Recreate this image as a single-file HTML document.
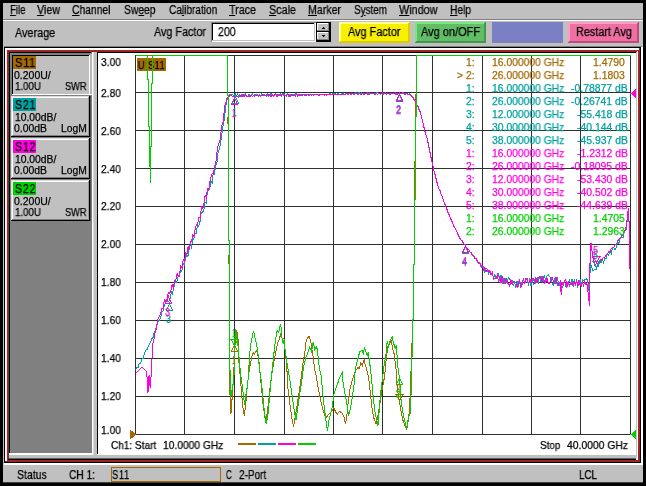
<!DOCTYPE html>
<html><head><meta charset="utf-8"><title>Network Analyzer</title>
<style>
html,body{margin:0;padding:0;background:#000;}
body{width:646px;height:486px;position:relative;overflow:hidden;font-family:"Liberation Sans",sans-serif;}
body>div{position:absolute;}
.t{position:absolute;white-space:pre;line-height:1;font-family:"Liberation Sans",sans-serif;-webkit-text-stroke:0.25px;will-change:transform;}
u{text-decoration:underline;text-underline-offset:1px;}
svg{position:absolute;left:0;top:0;}
svg text{font-family:"Liberation Sans",sans-serif;}
</style></head><body>
<div style="left:3px;top:3px;width:640px;height:480px;background:#c0c0c0;"></div>
<div style="left:3px;top:19px;width:640px;height:1px;background:#808080;"></div>
<div style="left:3px;top:20px;width:640px;height:1px;background:#fff;"></div>
<span class="t " style="top:2px;font-size:12px;line-height:16px;color:#000;left:9.50px;transform-origin:left top;transform:scaleX(0.8018);"><u>F</u>ile</span>
<span class="t " style="top:2px;font-size:12px;line-height:16px;color:#000;left:37.00px;transform-origin:left top;transform:scaleX(0.8906);"><u>V</u>iew</span>
<span class="t " style="top:2px;font-size:12px;line-height:16px;color:#000;left:72.00px;transform-origin:left top;transform:scaleX(0.8613);"><u>C</u>hannel</span>
<span class="t " style="top:2px;font-size:12px;line-height:16px;color:#000;left:124.00px;transform-origin:left top;transform:scaleX(0.8584);">Sw<u>e</u>ep</span>
<span class="t " style="top:2px;font-size:12px;line-height:16px;color:#000;left:168.75px;transform-origin:left top;transform:scaleX(0.8412);">Ca<u>l</u>ibration</span>
<span class="t " style="top:2px;font-size:12px;line-height:16px;color:#000;left:229.00px;transform-origin:left top;transform:scaleX(0.8932);"><u>T</u>race</span>
<span class="t " style="top:2px;font-size:12px;line-height:16px;color:#000;left:269.00px;transform-origin:left top;transform:scaleX(0.8996);"><u>S</u>cale</span>
<span class="t " style="top:2px;font-size:12px;line-height:16px;color:#000;left:308.00px;transform-origin:left top;transform:scaleX(0.8840);"><u>M</u>arker</span>
<span class="t " style="top:2px;font-size:12px;line-height:16px;color:#000;left:354.00px;transform-origin:left top;transform:scaleX(0.8248);">S<u>y</u>stem</span>
<span class="t " style="top:2px;font-size:12px;line-height:16px;color:#000;left:399.00px;transform-origin:left top;transform:scaleX(0.9015);"><u>W</u>indow</span>
<span class="t " style="top:2px;font-size:12px;line-height:16px;color:#000;left:450.00px;transform-origin:left top;transform:scaleX(0.8508);"><u>H</u>elp</span>
<span class="t " style="top:25px;font-size:12px;line-height:16px;color:#000;left:14.90px;transform-origin:left top;transform:scaleX(0.9037);">Average</span>
<span class="t " style="top:24px;font-size:12px;line-height:16px;color:#000;left:154.00px;transform-origin:left top;transform:scaleX(0.8996);">Avg Factor</span>
<div style="left:211px;top:22px;width:105px;height:20px;background:#fff;"></div>
<div style="left:211px;top:22px;width:105px;height:1px;background:#808080;"></div>
<div style="left:211px;top:22px;width:1px;height:20px;background:#808080;"></div>
<div style="left:212px;top:23px;width:103px;height:1px;background:#000;"></div>
<div style="left:212px;top:23px;width:1px;height:18px;background:#000;"></div>
<div style="left:212px;top:40px;width:103px;height:1px;background:#c0c0c0;"></div>
<div style="left:314px;top:23px;width:1px;height:18px;background:#c0c0c0;"></div>
<span class="t " style="top:24px;font-size:12px;line-height:16px;color:#000;left:217.60px;transform-origin:left top;transform:scaleX(0.8843);">200</span>
<div style="left:316px;top:22px;width:15px;height:20px;background:#000;"></div>
<div style="left:317px;top:23px;width:12px;height:8px;background:#c0c0c0;"></div>
<div style="left:317px;top:23px;width:11px;height:1px;background:#fff;"></div>
<div style="left:317px;top:23px;width:1px;height:7px;background:#fff;"></div>
<div style="left:328px;top:23px;width:1px;height:8px;background:#808080;"></div>
<div style="left:317px;top:30px;width:12px;height:1px;background:#808080;"></div>
<div style="left:323px;top:27px;width:1px;height:1px;background:#000;"></div>
<div style="left:322px;top:28px;width:3px;height:1px;background:#000;"></div>
<div style="left:317px;top:32px;width:12px;height:8px;background:#c0c0c0;"></div>
<div style="left:317px;top:32px;width:11px;height:1px;background:#fff;"></div>
<div style="left:317px;top:32px;width:1px;height:7px;background:#fff;"></div>
<div style="left:328px;top:32px;width:1px;height:8px;background:#808080;"></div>
<div style="left:317px;top:39px;width:12px;height:1px;background:#808080;"></div>
<div style="left:322px;top:35px;width:3px;height:1px;background:#000;"></div>
<div style="left:323px;top:36px;width:1px;height:1px;background:#000;"></div>
<div style="left:339px;top:22px;width:71px;height:21px;background:#f8f000;"></div>
<div style="left:339px;top:22px;width:71px;height:2px;background:#ffff98;"></div>
<div style="left:339px;top:22px;width:2px;height:21px;background:#ffff98;"></div>
<div style="left:340px;top:41px;width:70px;height:1px;background:#dccc00;"></div>
<div style="left:339px;top:42px;width:71px;height:1px;background:#dccc00;"></div>
<div style="left:408px;top:23px;width:1px;height:20px;background:#dccc00;"></div>
<div style="left:409px;top:22px;width:1px;height:21px;background:#dccc00;"></div>
<span class="t " style="top:24px;font-size:12px;line-height:16px;color:#000;left:348.00px;transform-origin:left top;transform:scaleX(0.9082);">Avg Factor</span>
<div style="left:415px;top:22px;width:71px;height:21px;background:#62be66;"></div>
<div style="left:415px;top:22px;width:71px;height:2px;background:#76e87c;"></div>
<div style="left:415px;top:22px;width:2px;height:21px;background:#76e87c;"></div>
<div style="left:416px;top:41px;width:70px;height:1px;background:#44984c;"></div>
<div style="left:415px;top:42px;width:71px;height:1px;background:#44984c;"></div>
<div style="left:484px;top:23px;width:1px;height:20px;background:#44984c;"></div>
<div style="left:485px;top:22px;width:1px;height:21px;background:#44984c;"></div>
<span class="t " style="top:24px;font-size:12px;line-height:16px;color:#000;left:421.00px;transform-origin:left top;transform:scaleX(0.9151);">Avg on/OFF</span>
<div style="left:492px;top:22px;width:71px;height:21px;background:#7b7fc3;"></div>
<div style="left:568px;top:22px;width:71px;height:21px;background:#ee6fa2;"></div>
<div style="left:568px;top:22px;width:71px;height:2px;background:#ff9cc4;"></div>
<div style="left:568px;top:22px;width:2px;height:21px;background:#ff9cc4;"></div>
<div style="left:569px;top:41px;width:70px;height:1px;background:#c04a7c;"></div>
<div style="left:568px;top:42px;width:71px;height:1px;background:#c04a7c;"></div>
<div style="left:637px;top:23px;width:1px;height:20px;background:#c04a7c;"></div>
<div style="left:638px;top:22px;width:1px;height:21px;background:#c04a7c;"></div>
<span class="t " style="top:24px;font-size:12px;line-height:16px;color:#000;left:575.80px;transform-origin:left top;transform:scaleX(0.9027);">Restart Avg</span>
<div style="left:4px;top:46px;width:638px;height:1px;background:#808080;"></div>
<div style="left:4px;top:47px;width:637px;height:1px;background:#000;"></div>
<div style="left:4px;top:47px;width:1px;height:416px;background:#000;"></div>
<div style="left:641px;top:47px;width:2px;height:418px;background:#fff;"></div>
<div style="left:4px;top:463px;width:639px;height:2px;background:#fff;"></div>
<div style="left:5px;top:48px;width:634px;height:2px;background:#fff;"></div>
<div style="left:5px;top:48px;width:2px;height:413px;background:#fff;"></div>
<div style="left:639px;top:48px;width:1px;height:415px;background:#404848;"></div>
<div style="left:640px;top:47px;width:1px;height:416px;background:#000;"></div>
<div style="left:5px;top:461px;width:635px;height:1px;background:#404848;"></div>
<div style="left:4px;top:462px;width:637px;height:1px;background:#000;"></div>
<div style="left:7px;top:50px;width:632px;height:1px;background:#ff0000;"></div>
<div style="left:7px;top:460px;width:632px;height:1px;background:#ff0000;"></div>
<div style="left:7px;top:50px;width:1px;height:411px;background:#ff0000;"></div>
<div style="left:638px;top:50px;width:1px;height:411px;background:#ff0000;"></div>
<div style="left:8px;top:51px;width:630px;height:1px;background:#404848;"></div>
<div style="left:8px;top:51px;width:1px;height:409px;background:#404848;"></div>
<div style="left:9px;top:52px;width:628px;height:1px;background:#000;"></div>
<div style="left:9px;top:52px;width:1px;height:408px;background:#000;"></div>
<div style="left:8px;top:459px;width:629px;height:1px;background:#000;"></div>
<div style="left:637px;top:51px;width:1px;height:409px;background:#fff;"></div>
<div style="left:10px;top:53px;width:82px;height:400px;background:#808080;"></div>
<div style="left:9px;top:453px;width:628px;height:2px;background:#fff;"></div>
<div style="left:9px;top:455px;width:628px;height:3px;background:#c0c0c0;"></div>
<div style="left:9px;top:458px;width:628px;height:1px;background:#606060;"></div>
<div style="left:636px;top:458px;width:2px;height:2px;background:#fff;"></div>
<div style="left:91px;top:52px;width:1px;height:1px;background:#808080;"></div>
<div style="left:92px;top:52px;width:1px;height:403px;background:#fff;"></div>
<div style="left:93px;top:52px;width:1px;height:403px;background:#dcdcdc;"></div>
<div style="left:94px;top:52px;width:3px;height:403px;background:#c0c0c0;"></div>
<div style="left:11px;top:54px;width:80px;height:41px;background:#c0c0c0;"></div>
<div style="left:11px;top:54px;width:80px;height:1px;background:#808080;"></div>
<div style="left:11px;top:54px;width:1px;height:41px;background:#808080;"></div>
<div style="left:12px;top:55px;width:78px;height:1px;background:#000;"></div>
<div style="left:12px;top:55px;width:1px;height:39px;background:#000;"></div>
<div style="left:12px;top:94px;width:80px;height:1px;background:#fff;"></div>
<div style="left:89px;top:55px;width:1px;height:40px;background:#fff;"></div>
<div style="left:90px;top:54px;width:2px;height:40px;background:#b8b8b8;"></div>
<div style="left:13px;top:56px;width:23px;height:13px;background:#a46a00;"></div>
<span class="t " style="top:55px;font-size:12px;line-height:16px;color:#000;left:14.90px;transform-origin:left top;transform:scaleX(0.9164);letter-spacing:0.9px;">S11</span>
<span class="t " style="top:69px;font-size:10.3px;line-height:13px;color:#000;left:14.10px;transform-origin:left top;transform:scaleX(1.0172);">0.200U/</span>
<span class="t " style="top:80px;font-size:10.3px;line-height:13px;color:#000;left:15.10px;transform-origin:left top;transform:scaleX(0.9461);">1.00U</span>
<span class="t " style="top:80px;font-size:10.3px;line-height:13px;color:#000;left:64.60px;transform-origin:left top;transform:scaleX(0.8989);">SWR</span>
<div style="left:11px;top:96px;width:80px;height:41px;background:#c0c0c0;"></div>
<div style="left:11px;top:96px;width:79px;height:1px;background:#dcdcdc;"></div>
<div style="left:11px;top:96px;width:1px;height:40px;background:#dcdcdc;"></div>
<div style="left:12px;top:97px;width:77px;height:1px;background:#fff;"></div>
<div style="left:12px;top:97px;width:1px;height:38px;background:#fff;"></div>
<div style="left:12px;top:135px;width:78px;height:1px;background:#808080;"></div>
<div style="left:88px;top:97px;width:1px;height:39px;background:#989898;"></div>
<div style="left:11px;top:136px;width:80px;height:1px;background:#000;"></div>
<div style="left:89px;top:96px;width:1px;height:41px;background:#000;"></div>
<div style="left:90px;top:96px;width:1px;height:41px;background:#505050;"></div>
<div style="left:13px;top:98px;width:23px;height:13px;background:#00a0a0;"></div>
<span class="t " style="top:97px;font-size:12px;line-height:16px;color:#000;left:14.90px;transform-origin:left top;transform:scaleX(0.8813);letter-spacing:0.9px;">S21</span>
<span class="t " style="top:111px;font-size:10.3px;line-height:13px;color:#000;left:14.90px;transform-origin:left top;transform:scaleX(1.0039);">10.00dB/</span>
<span class="t " style="top:122px;font-size:10.3px;line-height:13px;color:#000;left:14.10px;transform-origin:left top;transform:scaleX(1.0110);">0.00dB</span>
<span class="t " style="top:122px;font-size:10.3px;line-height:13px;color:#000;left:60.50px;transform-origin:left top;transform:scaleX(0.9977);">LogM</span>
<div style="left:11px;top:138px;width:80px;height:41px;background:#c0c0c0;"></div>
<div style="left:11px;top:138px;width:79px;height:1px;background:#dcdcdc;"></div>
<div style="left:11px;top:138px;width:1px;height:40px;background:#dcdcdc;"></div>
<div style="left:12px;top:139px;width:77px;height:1px;background:#fff;"></div>
<div style="left:12px;top:139px;width:1px;height:38px;background:#fff;"></div>
<div style="left:12px;top:177px;width:78px;height:1px;background:#808080;"></div>
<div style="left:88px;top:139px;width:1px;height:39px;background:#989898;"></div>
<div style="left:11px;top:178px;width:80px;height:1px;background:#000;"></div>
<div style="left:89px;top:138px;width:1px;height:41px;background:#000;"></div>
<div style="left:90px;top:138px;width:1px;height:41px;background:#505050;"></div>
<div style="left:13px;top:140px;width:23px;height:13px;background:#ff00e0;"></div>
<span class="t " style="top:139px;font-size:12px;line-height:16px;color:#000;left:14.90px;transform-origin:left top;transform:scaleX(0.8813);letter-spacing:0.9px;">S12</span>
<span class="t " style="top:153px;font-size:10.3px;line-height:13px;color:#000;left:14.90px;transform-origin:left top;transform:scaleX(1.0039);">10.00dB/</span>
<span class="t " style="top:164px;font-size:10.3px;line-height:13px;color:#000;left:14.10px;transform-origin:left top;transform:scaleX(1.0110);">0.00dB</span>
<span class="t " style="top:164px;font-size:10.3px;line-height:13px;color:#000;left:60.50px;transform-origin:left top;transform:scaleX(0.9977);">LogM</span>
<div style="left:11px;top:180px;width:80px;height:41px;background:#c0c0c0;"></div>
<div style="left:11px;top:180px;width:79px;height:1px;background:#dcdcdc;"></div>
<div style="left:11px;top:180px;width:1px;height:40px;background:#dcdcdc;"></div>
<div style="left:12px;top:181px;width:77px;height:1px;background:#fff;"></div>
<div style="left:12px;top:181px;width:1px;height:38px;background:#fff;"></div>
<div style="left:12px;top:219px;width:78px;height:1px;background:#808080;"></div>
<div style="left:88px;top:181px;width:1px;height:39px;background:#989898;"></div>
<div style="left:11px;top:220px;width:80px;height:1px;background:#000;"></div>
<div style="left:89px;top:180px;width:1px;height:41px;background:#000;"></div>
<div style="left:90px;top:180px;width:1px;height:41px;background:#505050;"></div>
<div style="left:13px;top:182px;width:23px;height:13px;background:#00d000;"></div>
<span class="t " style="top:181px;font-size:12px;line-height:16px;color:#000;left:14.90px;transform-origin:left top;transform:scaleX(0.8813);letter-spacing:0.9px;">S22</span>
<span class="t " style="top:195px;font-size:10.3px;line-height:13px;color:#000;left:14.10px;transform-origin:left top;transform:scaleX(1.0172);">0.200U/</span>
<span class="t " style="top:206px;font-size:10.3px;line-height:13px;color:#000;left:15.10px;transform-origin:left top;transform:scaleX(0.9461);">1.00U</span>
<span class="t " style="top:206px;font-size:10.3px;line-height:13px;color:#000;left:64.60px;transform-origin:left top;transform:scaleX(0.8989);">SWR</span>
<div style="left:97px;top:52px;width:1px;height:402px;background:#000;"></div>
<div style="left:98px;top:53px;width:538px;height:400px;background:#fff;"></div>
<div style="left:636px;top:52px;width:1px;height:406px;background:#c4c4c4;"></div>
<div style="left:3px;top:482px;width:640px;height:1px;background:#404040;"></div>
<span class="t " style="top:467px;font-size:12.6px;line-height:16px;color:#000;left:17.30px;transform-origin:left top;transform:scaleX(0.8314);">Status</span>
<span class="t " style="top:467px;font-size:12.6px;line-height:16px;color:#000;left:69.30px;transform-origin:left top;transform:scaleX(0.8073);">CH 1:</span>
<div style="left:111px;top:467px;width:110px;height:15px;background:#a46a00;"></div>
<div style="left:112px;top:468px;width:108px;height:13px;background:#c0c0c0;"></div>
<span class="t " style="top:467px;font-size:12px;line-height:16px;color:#000;left:111.90px;transform-origin:left top;transform:scaleX(0.7727);letter-spacing:0.9px;">S11</span>
<span class="t " style="top:467px;font-size:12.6px;line-height:16px;color:#000;left:225.80px;transform-origin:left top;transform:scaleX(0.6376);">C</span>
<span class="t " style="top:467px;font-size:12.6px;line-height:16px;color:#000;left:239.00px;transform-origin:left top;transform:scaleX(0.7957);">2-Port</span>
<span class="t " style="top:467px;font-size:12.6px;line-height:16px;color:#000;left:578.60px;transform-origin:left top;transform:scaleX(0.7789);">LCL</span>
<div style="left:137px;top:58px;width:29px;height:13px;background:#a46a00;"></div>
<span class="t " style="top:58px;font-size:11px;line-height:14px;color:#000;left:137.90px;transform-origin:left top;transform:scaleX(0.7945);letter-spacing:0.9px;">U S11</span>
<svg width="646" height="486" viewBox="0 0 646 486">
<path d="M135.5 55V435M184.5 55V435M234.5 55V435M284.5 55V435M333.5 55V435M382.5 55V435M432.5 55V435M482.5 55V435M531.5 55V435M580.5 55V435M630.5 55V435M135 55.5H631M135 92.5H631M135 130.5H631M135 168.5H631M135 206.5H631M135 244.5H631M135 282.5H631M135 320.5H631M135 358.5H631M135 396.5H631M135 434.5H631" stroke="#303030" stroke-width="1" fill="none" shape-rendering="crispEdges"/>
<path d="M135.5 55.5 L227.5 55.5 L227.5 95.0 L228.5 96.0 L228.5 117.0 L227.5 118.0 L227.5 123.0 L228.5 124.0 L228.5 240.0 L229.5 241.0 L229.5 255.0 L228.5 256.0 L228.5 263.0 L229.5 264.0 L229.5 370.0 L230.0 395.0 L230.4 413.8 L231.2 412.0 L232.3 395.0 L233.7 376.0 L234.6 350.0 L235.9 329.1 L236.5 335.0 L237.4 333.0 L238.0 339.0 L238.4 350.2 L239.0 362.6 L240.2 376.0 L241.5 392.0 L242.7 405.7 L244.3 416.2 L245.8 403.2 L247.0 389.6 L248.5 376.0 L248.9 372.5 L250.1 365.0 L252.0 356.4 L253.2 352.7 L254.5 354.5 L255.5 351.4 L256.7 350.2 L257.6 353.9 L258.8 360.1 L260.1 374.0 L261.9 392.1 L263.2 405.7 L265.0 418.1 L265.9 423.0 L267.3 412.0 L268.7 400.8 L270.0 388.4 L271.4 376.2 L273.7 362.6 L275.5 353.9 L277.4 344.0 L279.3 339.0 L280.5 334.7 L281.7 337.8 L284.2 339.0 L284.8 347.7 L286.1 360.1 L287.3 375.0 L287.9 388.4 L289.8 403.2 L291.6 416.9 L293.5 426.8 L295.3 416.9 L297.2 404.5 L299.1 392.1 L301.3 377.0 L302.8 363.8 L304.7 353.9 L306.2 340.3 L307.8 337.5 L309.4 336.3 L310.9 342.8 L312.7 353.9 L314.6 368.8 L316.4 377.0 L318.3 388.4 L320.8 400.8 L323.2 410.7 L325.7 418.1 L328.2 415.0 L331.3 411.9 L333.8 407.6 L335.6 411.9 L337.5 413.8 L339.3 411.3 L342.4 413.2 L344.3 418.1 L345.5 424.3 L346.8 415.6 L348.0 404.5 L349.9 389.6 L351.7 382.2 L353.4 377.0 L355.4 371.2 L357.9 367.5 L359.2 368.8 L361.0 362.6 L362.3 365.7 L364.1 359.5 L365.3 365.0 L367.2 371.2 L368.6 377.0 L370.4 393.0 L372.4 411.9 L374.2 419.3 L376.1 423.7 L378.0 415.6 L379.8 404.5 L381.7 392.1 L383.5 382.2 L384.5 377.0 L385.4 367.5 L386.6 355.2 L387.9 346.5 L389.7 344.0 L391.0 339.7 L392.2 346.5 L394.1 353.9 L395.3 362.6 L396.5 374.0 L397.2 388.4 L399.0 399.5 L400.9 410.7 L403.3 421.8 L406.8 429.3 L408.3 420.6 L409.5 409.4 L410.5 385.9 L411.5 357.0 L411.5 344.0 L412.5 343.0 L412.5 320.0 L413.5 319.0 L413.5 265.0 L414.5 264.0 L414.5 162.0 L415.5 161.0 L415.5 95.0 L416.5 94.0 L416.5 55.5 L630.5 55.5" stroke="#a46a00" stroke-width="1" fill="none" shape-rendering="crispEdges" stroke-linejoin="miter"/>
<path d="M135.6 370.0 L136.8 367.9 L138.1 367.5 L139.3 363.3 L140.5 363.3 L141.8 359.0 L143.0 358.8 L144.4 354.1 L145.8 350.1 L147.2 349.7 L148.6 345.3 L150.1 343.1 L151.7 338.9 L153.2 337.4 L154.4 331.5 L155.6 330.2 L156.7 324.3 L157.9 322.4 L159.2 320.3 L160.5 318.6 L161.8 311.4 L163.1 311.0 L164.4 305.1 L165.6 303.0 L166.7 299.7 L167.9 302.1 L169.1 300.6 L170.2 298.3 L171.4 291.7 L172.5 293.7 L173.7 288.3 L175.6 280.6 L176.8 282.1 L178.1 276.7 L179.3 276.1 L180.6 269.9 L181.8 271.8 L183.0 263.5 L184.3 265.2 L185.5 258.7 L186.7 254.0 L187.9 256.9 L189.1 248.6 L190.3 244.6 L191.5 247.4 L192.7 239.1 L193.8 239.1 L195.0 233.0 L196.2 233.2 L197.4 225.1 L198.6 226.3 L199.8 223.1 L201.2 212.9 L202.6 212.3 L203.8 210.2 L205.0 202.0 L206.1 202.9 L207.3 192.4 L208.5 189.4 L209.7 189.2 L210.9 180.9 L212.1 183.2 L213.2 173.6 L214.4 174.5 L215.6 166.2 L216.9 163.3 L218.2 151.6 L219.5 149.2 L220.8 141.8 L223.0 126.4 L224.2 119.4 L225.7 106.7 L226.9 100.1 L228.2 96.9 L229.4 95.3 L230.6 94.9 L232.3 94.3 L234.0 96.5 L235.2 94.0 L236.3 96.2 L237.5 94.2 L238.6 96.6 L239.8 94.4 L241.0 96.4 L242.1 94.2 L243.3 96.4 L244.4 94.2 L245.6 94.0 L246.8 96.3 L247.9 96.1 L249.1 94.5 L250.2 96.1 L251.4 94.2 L252.5 94.0 L253.7 95.8 L254.9 94.2 L256.0 96.3 L257.2 94.1 L258.3 96.0 L259.5 94.6 L260.7 95.9 L261.8 93.9 L263.0 95.4 L264.1 94.1 L265.3 95.5 L266.5 96.0 L267.6 93.8 L268.8 96.0 L269.9 94.3 L271.1 93.8 L272.2 94.3 L273.4 95.6 L274.6 94.2 L275.7 93.8 L276.9 96.2 L278.0 94.5 L279.2 95.5 L280.4 94.2 L281.5 95.7 L282.7 93.8 L283.8 94.1 L285.0 95.3 L286.2 95.2 L287.3 94.0 L288.5 95.9 L289.6 94.4 L290.8 95.2 L291.9 95.3 L293.1 94.4 L294.2 95.5 L295.4 93.8 L296.5 93.5 L297.7 95.2 L298.8 94.2 L300.0 94.9 L301.2 94.5 L302.3 94.9 L303.5 94.3 L304.6 95.0 L305.8 94.2 L306.9 94.4 L308.1 94.2 L309.2 94.8 L310.4 94.1 L311.5 94.8 L312.7 94.9 L313.8 94.7 L315.0 94.3 L316.2 94.8 L317.3 94.0 L318.5 94.8 L319.6 94.8 L320.8 94.0 L321.9 94.7 L323.1 94.5 L324.2 94.0 L325.4 94.6 L326.5 94.1 L327.7 94.1 L328.8 94.4 L330.0 93.8 L331.2 94.3 L332.4 93.8 L333.5 93.7 L334.7 93.8 L335.9 93.9 L337.1 94.3 L338.2 93.6 L339.4 94.2 L340.6 94.2 L341.8 93.6 L342.9 93.4 L344.1 94.2 L345.3 94.3 L346.5 93.4 L347.6 94.2 L348.8 93.4 L350.0 93.1 L351.2 94.3 L352.3 93.1 L353.5 93.8 L354.6 93.1 L355.8 92.8 L356.9 94.1 L358.1 93.1 L359.2 92.8 L360.4 94.0 L361.5 93.0 L362.7 93.3 L363.8 93.8 L365.0 93.2 L366.2 93.9 L367.3 93.0 L368.5 94.2 L369.6 93.0 L370.8 93.8 L371.9 93.1 L373.1 94.0 L374.2 93.2 L375.4 94.1 L376.5 93.0 L377.7 92.9 L378.8 93.2 L380.0 94.2 L381.2 93.9 L382.4 92.7 L383.5 94.3 L384.7 93.7 L385.9 92.8 L387.1 93.7 L388.2 93.9 L389.4 93.1 L390.6 94.0 L391.8 93.1 L392.9 94.1 L394.1 93.6 L395.3 92.7 L396.5 93.9 L397.6 93.1 L398.8 93.5 L400.0 92.8 L401.2 93.6 L402.3 93.1 L403.5 92.6 L404.7 93.2 L405.9 94.3 L407.0 92.9 L408.2 94.1 L409.4 93.8 L410.7 95.1 L411.9 95.7 L413.2 98.5 L414.4 99.7 L415.6 102.6 L416.9 104.5 L418.1 106.5 L420.0 111.6 L421.8 118.0 L423.7 126.2 L425.5 133.9 L427.4 138.7 L428.8 147.0 L430.2 153.9 L431.6 160.6 L433.0 165.9 L434.1 171.5 L435.3 175.5 L436.5 180.8 L437.6 184.6 L438.8 188.6 L440.1 190.5 L441.3 194.7 L442.5 197.1 L443.6 201.2 L444.8 204.6 L446.0 206.8 L447.1 210.0 L448.3 213.6 L449.7 215.9 L451.1 219.8 L452.5 222.5 L453.9 226.7 L455.3 228.4 L456.7 231.1 L458.1 233.9 L459.5 237.0 L460.9 239.8 L462.2 240.7 L463.6 243.8 L465.0 245.1 L466.2 247.3 L467.5 249.0 L468.8 249.7 L470.0 252.0 L471.2 252.7 L472.5 255.6 L473.7 256.0 L475.0 258.3 L476.2 258.2 L477.4 262.6 L478.7 262.0 L479.9 262.2 L481.1 267.4 L482.4 265.2 L483.6 266.8 L484.8 271.7 L486.1 268.6 L487.3 269.0 L488.6 273.4 L489.8 271.2 L491.1 274.9 L492.3 273.4 L493.6 278.3 L494.8 274.4 L496.0 279.2 L497.3 274.6 L498.5 273.7 L499.7 280.7 L501.0 274.7 L502.2 283.5 L503.4 278.1 L504.7 284.2 L505.9 277.7 L507.1 283.7 L508.4 277.3 L509.6 278.2 L510.9 284.5 L512.1 280.5 L513.4 285.3 L514.6 282.4 L515.9 288.1 L517.1 281.0 L518.4 287.2 L519.6 281.2 L520.9 287.7 L522.2 281.1 L523.5 278.8 L524.7 284.0 L526.0 279.3 L527.2 278.7 L528.5 286.2 L529.8 277.8 L531.0 285.7 L532.2 278.2 L533.5 285.3 L534.7 279.0 L535.9 283.5 L537.2 278.0 L538.4 281.8 L539.6 276.4 L540.8 282.3 L542.1 276.0 L543.3 281.5 L544.5 275.6 L545.8 281.1 L547.0 275.9 L548.3 274.8 L549.6 276.9 L550.9 277.6 L552.1 283.0 L553.4 285.1 L554.7 278.2 L556.0 283.6 L557.5 279.0 L559.0 285.7 L560.5 279.7 L561.2 289.6 L562.0 287.6 L563.2 285.8 L564.5 280.3 L565.8 286.9 L567.0 287.2 L568.2 285.0 L569.5 279.3 L570.8 285.1 L572.0 278.9 L573.2 287.1 L574.3 279.5 L575.5 285.7 L576.6 279.4 L577.8 287.6 L578.9 281.0 L580.1 279.7 L581.2 286.8 L582.4 279.6 L583.5 280.7 L584.7 279.7 L585.8 279.2 L587.0 278.9 L588.3 284.1 L589.6 295.9 L590.2 263.5 L591.0 265.1 L593.0 270.6 L595.0 269.0 L596.2 269.7 L597.4 264.0 L598.5 266.0 L599.7 261.1 L601.0 263.0 L602.2 259.4 L603.5 262.3 L604.8 258.0 L606.1 258.4 L607.4 253.8 L608.7 255.3 L610.0 251.5 L611.3 253.5 L612.5 248.4 L613.8 247.2 L615.1 249.9 L616.4 247.0 L617.7 241.4 L618.9 243.2 L620.2 237.8 L621.6 236.9 L623.0 237.9 L624.4 231.6 L626.4 229.1 L627.4 217.1 L628.4 211.7 L629.4 228.2 L629.7 262.0" stroke="#00a0a0" stroke-width="1" fill="none" shape-rendering="crispEdges" stroke-linejoin="miter"/>
<path d="M135.6 373.6 L136.9 372.3 L138.2 371.0 L139.4 369.8 L140.7 368.5 L142.0 367.2 L143.2 368.4 L144.3 369.6 L145.5 370.8 L146.7 372.0 L148.0 392.5 L149.1 375.0 L150.1 387.5 L151.4 373.0 L152.0 359.5 L152.3 344.7 L153.7 340.7 L155.1 332.3 L156.5 328.1 L157.9 319.5 L159.2 316.4 L160.5 314.5 L161.8 308.4 L163.1 308.2 L164.4 299.3 L165.7 301.3 L167.0 299.3 L168.3 292.7 L169.6 293.4 L170.9 290.9 L172.1 284.4 L173.4 287.9 L174.6 280.1 L175.8 280.6 L177.1 273.3 L178.3 276.7 L179.6 274.2 L180.8 266.2 L182.0 268.0 L183.3 259.4 L184.5 262.4 L185.7 252.7 L186.9 254.5 L188.1 246.2 L189.3 249.5 L190.5 241.2 L191.7 241.0 L192.8 235.1 L194.0 236.6 L195.2 228.8 L196.4 224.3 L197.6 224.8 L198.8 217.0 L200.2 217.0 L201.6 206.7 L202.8 208.4 L204.0 203.6 L205.1 195.2 L206.3 197.7 L207.5 188.9 L208.7 190.2 L209.9 181.2 L211.1 176.3 L212.2 173.6 L213.4 174.6 L214.6 166.4 L215.9 162.1 L217.2 150.2 L218.5 144.0 L219.8 141.2 L222.0 125.4 L223.2 121.6 L224.7 105.6 L225.9 102.5 L227.2 97.7 L228.4 98.2 L229.6 94.9 L234.0 97.1 L235.2 96.3 L236.3 95.3 L237.5 96.3 L238.6 95.3 L239.8 96.6 L241.0 95.6 L242.1 96.5 L243.3 95.0 L244.4 96.2 L245.6 95.1 L246.8 96.6 L247.9 96.4 L249.1 95.2 L250.2 96.6 L251.4 95.4 L252.5 96.6 L253.7 95.1 L254.9 96.2 L256.0 95.2 L257.2 95.3 L258.3 96.1 L259.5 95.2 L260.7 96.6 L261.8 95.1 L263.0 96.2 L264.1 94.9 L265.3 96.0 L266.5 94.8 L267.6 95.1 L268.8 96.6 L269.9 94.5 L271.1 96.6 L272.2 94.9 L273.4 96.5 L274.6 94.4 L275.7 94.5 L276.9 96.6 L278.0 94.9 L279.2 94.9 L280.4 95.8 L281.5 95.0 L282.7 94.4 L283.8 95.8 L285.0 95.0 L286.2 96.3 L287.3 94.7 L288.5 94.7 L289.6 96.3 L290.8 96.3 L291.9 94.7 L293.1 96.2 L294.2 94.8 L295.4 95.9 L296.5 94.5 L297.7 96.2 L298.8 94.4 L300.0 95.4 L301.2 95.3 L302.3 95.2 L303.5 94.9 L304.6 95.3 L305.8 94.9 L306.9 95.1 L308.1 94.8 L309.2 95.3 L310.4 94.8 L311.5 95.2 L312.7 94.9 L313.8 95.1 L315.0 94.7 L316.2 95.1 L317.3 94.6 L318.5 95.2 L319.6 95.0 L320.8 94.6 L321.9 95.0 L323.1 94.7 L324.2 95.1 L325.4 94.6 L326.5 95.0 L327.7 94.5 L328.8 94.9 L330.0 94.6 L331.2 94.9 L332.4 94.5 L333.5 94.7 L334.7 94.4 L335.9 94.4 L337.1 94.3 L338.2 94.2 L339.4 94.6 L340.6 94.2 L341.8 94.6 L342.9 94.0 L344.1 94.4 L345.3 94.0 L346.5 93.7 L347.6 94.7 L348.8 94.3 L350.0 93.6 L351.2 94.5 L352.3 93.5 L353.5 94.5 L354.6 94.4 L355.8 93.7 L356.9 94.1 L358.1 94.2 L359.2 93.6 L360.4 94.3 L361.5 94.3 L362.7 93.5 L363.8 94.5 L365.0 93.4 L366.2 93.3 L367.3 94.2 L368.5 93.4 L369.6 94.2 L370.8 93.4 L371.9 94.1 L373.1 93.7 L374.2 94.2 L375.4 94.2 L376.5 93.6 L377.7 94.3 L378.8 93.6 L380.0 93.4 L381.2 93.4 L382.4 94.1 L383.5 93.2 L384.7 93.3 L385.9 93.9 L387.1 94.1 L388.2 93.6 L389.4 94.1 L390.6 94.2 L391.8 93.3 L392.9 94.0 L394.1 93.6 L395.3 94.1 L396.5 93.5 L397.6 94.1 L398.8 93.3 L400.0 94.1 L401.2 93.3 L402.3 94.0 L403.5 93.2 L404.7 94.1 L405.9 93.4 L407.0 94.2 L408.2 94.0 L409.4 94.1 L410.7 94.7 L411.9 96.9 L413.2 97.8 L414.4 99.7 L415.6 102.7 L416.9 104.6 L418.1 107.6 L420.0 111.4 L421.8 118.2 L423.7 126.3 L425.5 132.8 L427.4 139.8 L428.8 146.3 L430.2 153.3 L431.6 160.1 L433.0 166.3 L434.1 171.0 L435.3 175.3 L436.5 180.7 L437.6 184.6 L438.8 188.5 L440.1 190.9 L441.3 194.8 L442.5 197.1 L443.6 201.1 L444.8 203.8 L446.0 207.2 L447.1 209.8 L448.3 213.2 L449.7 215.8 L451.1 219.8 L452.5 222.3 L453.9 226.3 L455.3 228.3 L456.7 231.2 L458.1 234.8 L459.5 237.6 L460.9 239.7 L462.2 241.0 L463.6 243.6 L465.0 245.0 L466.2 247.2 L467.5 248.3 L468.8 249.9 L470.0 252.0 L471.2 253.1 L472.5 255.6 L473.7 255.6 L475.0 258.6 L476.2 258.4 L477.4 261.4 L478.7 263.2 L479.9 263.1 L481.1 266.3 L482.4 265.5 L483.6 269.6 L484.8 267.4 L486.1 272.2 L487.3 269.3 L488.6 271.7 L489.8 270.8 L491.1 274.9 L492.3 272.1 L493.6 278.6 L494.8 278.7 L496.0 278.1 L497.3 275.1 L498.5 281.7 L499.7 275.8 L501.0 283.3 L502.2 276.5 L503.4 282.7 L504.7 279.3 L505.9 283.4 L507.1 280.5 L508.4 284.4 L509.6 286.2 L510.9 279.3 L512.1 284.7 L513.4 281.9 L514.6 281.6 L515.9 282.5 L517.1 287.6 L518.4 282.3 L519.6 279.6 L520.9 287.4 L522.2 284.3 L523.5 279.0 L524.7 284.1 L526.0 278.6 L527.2 280.2 L528.5 283.3 L529.8 279.7 L531.0 282.4 L532.2 278.4 L533.5 278.6 L534.7 283.8 L535.9 277.6 L537.2 282.8 L538.4 277.2 L539.6 276.6 L540.8 276.6 L542.1 282.5 L543.3 276.2 L544.5 283.3 L545.8 282.2 L547.0 278.1 L548.3 282.9 L549.6 283.5 L550.9 278.3 L552.1 277.2 L553.4 281.7 L554.7 283.6 L556.0 276.8 L557.5 285.1 L559.0 284.2 L560.5 281.4 L561.2 295.4 L562.0 282.1 L563.2 285.8 L564.5 281.2 L565.8 279.7 L567.0 287.2 L568.2 281.7 L569.5 285.5 L570.8 282.2 L572.0 285.2 L573.2 284.7 L574.3 281.8 L575.5 284.6 L576.6 280.1 L577.8 285.8 L578.9 280.9 L580.1 284.8 L581.2 285.4 L582.4 282.0 L583.5 285.2 L584.7 281.7 L585.8 284.8 L587.0 283.5 L589.6 305.5 L590.2 243.9 L591.0 243.4 L593.0 257.7 L595.0 266.3 L596.2 263.9 L597.4 263.9 L598.5 261.8 L599.7 261.3 L601.0 259.0 L602.2 259.8 L603.5 257.1 L604.8 257.4 L606.1 254.6 L607.4 254.1 L608.7 251.8 L610.0 251.6 L611.3 248.5 L612.5 247.8 L613.8 247.4 L615.1 244.9 L616.4 243.4 L617.7 242.2 L618.9 239.2 L620.2 238.6 L621.6 235.6 L623.0 234.5 L624.4 231.3 L626.4 226.5 L627.4 216.4 L628.4 207.9 L629.4 229.0 L629.7 269.0" stroke="#ff00e0" stroke-width="1" fill="none" shape-rendering="crispEdges" stroke-linejoin="miter"/>
<path d="M135.5 55.5 L147.7 55.5 L147.7 79.0 L148.6 79.0 L148.6 126.0 L149.5 126.0 L149.5 166.0 L150.4 166.0 L150.4 182.5 L150.4 146.0 L151.6 146.0 L151.6 83.0 L152.7 83.0 L152.7 55.5 L227.5 55.5 L227.5 95.0 L228.5 96.0 L228.5 240.0 L229.5 241.0 L229.5 370.0 L230.5 371.0 L230.6 390.0 L231.0 396.0 L232.8 386.0 L234.0 376.0 L234.6 350.0 L235.3 329.1 L236.8 338.0 L238.4 349.0 L239.6 365.0 L240.9 376.0 L242.7 389.6 L244.6 405.1 L245.8 395.8 L247.3 386.0 L248.4 376.5 L249.5 355.2 L251.4 340.3 L253.5 331.0 L255.7 340.9 L257.6 350.2 L259.4 367.5 L260.7 376.5 L262.5 392.1 L264.4 411.9 L266.2 424.3 L268.1 413.2 L269.6 395.8 L270.8 383.4 L271.5 376.5 L273.7 355.2 L275.5 340.3 L277.1 330.4 L278.6 332.2 L279.5 329.1 L280.5 324.2 L281.5 330.4 L282.0 338.4 L283.2 343.4 L284.0 339.7 L285.2 350.2 L286.7 361.3 L288.5 372.5 L289.4 377.0 L291.6 392.1 L294.1 409.4 L296.0 420.0 L297.8 407.0 L299.7 394.6 L301.5 382.2 L302.3 377.0 L303.4 367.5 L305.9 357.6 L307.8 352.7 L309.6 347.1 L311.5 351.4 L313.3 342.1 L314.6 349.6 L316.4 347.1 L317.7 350.2 L318.3 361.3 L320.1 371.2 L321.4 377.0 L322.6 392.1 L324.5 409.4 L326.3 423.1 L327.6 431.1 L328.8 420.6 L330.7 413.2 L332.5 405.7 L333.8 394.6 L335.6 389.6 L338.1 382.2 L339.3 378.5 L340.5 376.0 L342.2 372.5 L343.1 383.4 L344.9 393.3 L346.8 403.2 L348.6 415.6 L350.5 408.2 L352.3 397.1 L354.2 383.4 L354.6 377.0 L355.4 368.8 L357.3 361.3 L359.8 351.4 L362.2 350.8 L363.5 353.9 L364.5 347.1 L366.0 352.0 L367.2 355.1 L368.4 352.0 L369.1 358.9 L370.3 367.5 L371.4 377.0 L373.0 394.6 L374.9 411.9 L378.0 425.5 L379.2 410.7 L380.4 394.6 L382.3 379.7 L382.6 377.0 L384.1 365.0 L386.0 353.9 L387.2 341.5 L388.5 345.8 L390.3 339.7 L392.4 337.2 L393.4 342.8 L395.3 348.3 L396.5 345.2 L397.2 358.9 L398.4 372.5 L399.6 377.0 L400.9 398.3 L402.7 411.9 L405.2 423.1 L406.8 428.6 L408.3 418.1 L410.2 413.2 L411.0 395.8 L411.5 376.0 L411.5 357.0 L412.5 356.0 L412.5 320.0 L413.5 319.0 L413.5 265.0 L414.5 264.0 L414.5 200.0 L415.5 199.0 L415.5 117.0 L416.5 116.0 L416.5 55.5 L630.5 55.5" stroke="#00d000" stroke-width="1" fill="none" shape-rendering="crispEdges" stroke-linejoin="miter"/>
<path d="M235.5 96.5 L232.5 103.5 L238.5 103.5Z" stroke="#00a0a0" stroke-width="1" fill="none" shape-rendering="crispEdges"/>
<path d="M399.5 93.5 L396.5 100.5 L402.5 100.5Z" stroke="#00a0a0" stroke-width="1" fill="none" shape-rendering="crispEdges"/>
<path d="M169.5 303.5 L166.5 310.5 L172.5 310.5Z" stroke="#00a0a0" stroke-width="1" fill="none" shape-rendering="crispEdges"/>
<path d="M465.5 246.5 L462.5 253.5 L468.5 253.5Z" stroke="#00a0a0" stroke-width="1" fill="none" shape-rendering="crispEdges"/>
<path d="M596.5 267.5 L593.0 261.5 L600.0 261.5Z" stroke="#00a0a0" stroke-width="1" fill="none" shape-rendering="crispEdges"/>
<path d="M234.5 97.5 L231.5 104.5 L237.5 104.5Z" stroke="#ff00e0" stroke-width="1" fill="none" shape-rendering="crispEdges"/>
<path d="M399.5 94.5 L396.5 101.5 L402.5 101.5Z" stroke="#ff00e0" stroke-width="1" fill="none" shape-rendering="crispEdges"/>
<path d="M168.5 296.5 L165.5 303.5 L171.5 303.5Z" stroke="#ff00e0" stroke-width="1" fill="none" shape-rendering="crispEdges"/>
<path d="M465.5 245.5 L462.5 252.5 L468.5 252.5Z" stroke="#ff00e0" stroke-width="1" fill="none" shape-rendering="crispEdges"/>
<path d="M596.5 262.5 L593.0 256.5 L600.0 256.5Z" stroke="#ff00e0" stroke-width="1" fill="none" shape-rendering="crispEdges"/>
<path d="M234.5 344.5 L231.5 351.5 L237.5 351.5Z" stroke="#a46a00" stroke-width="1" fill="none" shape-rendering="crispEdges"/>
<path d="M399.5 400.5 L396.0 394.5 L403.0 394.5Z" stroke="#a46a00" stroke-width="1" fill="none" shape-rendering="crispEdges"/>
<path d="M234.5 345.5 L231.0 339.5 L238.0 339.5Z" stroke="#00d000" stroke-width="1" fill="none" shape-rendering="crispEdges"/>
<path d="M399.5 377.5 L396.5 384.5 L402.5 384.5Z" stroke="#00d000" stroke-width="1" fill="none" shape-rendering="crispEdges"/>
<rect x="238" y="443" width="18" height="2" fill="#a46a00" shape-rendering="crispEdges"/>
<rect x="258" y="443" width="18" height="2" fill="#00a0a0" shape-rendering="crispEdges"/>
<rect x="278" y="443" width="18" height="2" fill="#ff00e0" shape-rendering="crispEdges"/>
<rect x="298" y="443" width="18" height="2" fill="#00d000" shape-rendering="crispEdges"/>
<path d="M130 429.5L136.4 434.5L130 439.5Z" fill="#a46a00" shape-rendering="crispEdges"/>
<path d="M636 429.5L630.5 434.5L636 439.5Z" fill="#00d000" shape-rendering="crispEdges"/>
<path d="M636 89L630.5 93.5L636 98.5Z" fill="#ff00e0" shape-rendering="crispEdges"/>
</svg>
<span class="t " style="top:105px;font-size:11px;line-height:14px;color:#00a0a0;left:233.00px;transform-origin:left top;transform:scaleX(0.5886);">1</span>
<span class="t " style="top:102px;font-size:11px;line-height:14px;color:#00a0a0;left:396.10px;transform-origin:left top;transform:scaleX(0.8175);">2</span>
<span class="t " style="top:312px;font-size:11px;line-height:14px;color:#00a0a0;left:166.10px;transform-origin:left top;transform:scaleX(0.8175);">3</span>
<span class="t " style="top:255px;font-size:11px;line-height:14px;color:#00a0a0;left:462.10px;transform-origin:left top;transform:scaleX(0.8175);">4</span>
<span class="t " style="top:248px;font-size:11px;line-height:14px;color:#00a0a0;left:593.10px;transform-origin:left top;transform:scaleX(0.8175);">5</span>
<span class="t " style="top:106px;font-size:11px;line-height:14px;color:#ff00e0;left:232.00px;transform-origin:left top;transform:scaleX(0.5886);">1</span>
<span class="t " style="top:103px;font-size:11px;line-height:14px;color:#ff00e0;left:396.10px;transform-origin:left top;transform:scaleX(0.8175);">2</span>
<span class="t " style="top:305px;font-size:11px;line-height:14px;color:#ff00e0;left:165.10px;transform-origin:left top;transform:scaleX(0.8175);">3</span>
<span class="t " style="top:254px;font-size:11px;line-height:14px;color:#ff00e0;left:462.10px;transform-origin:left top;transform:scaleX(0.8175);">4</span>
<span class="t " style="top:243px;font-size:11px;line-height:14px;color:#ff00e0;left:593.10px;transform-origin:left top;transform:scaleX(0.8175);">5</span>
<span class="t " style="top:353px;font-size:11px;line-height:14px;color:#a46a00;left:232.00px;transform-origin:left top;transform:scaleX(0.5886);">1</span>
<span class="t " style="top:381px;font-size:11px;line-height:14px;color:#a46a00;left:396.10px;transform-origin:left top;transform:scaleX(0.8175);">2</span>
<span class="t " style="top:326px;font-size:11px;line-height:14px;color:#00d000;left:232.00px;transform-origin:left top;transform:scaleX(0.5886);">1</span>
<span class="t " style="top:386px;font-size:11px;line-height:14px;color:#00d000;left:396.10px;transform-origin:left top;transform:scaleX(0.8175);">2</span>
<span class="t " style="top:56px;font-size:10.4px;line-height:13px;color:#000;left:101.37px;transform-origin:left top;transform:scaleX(0.9800);">3.00</span>
<span class="t " style="top:87px;font-size:10.4px;line-height:13px;color:#000;left:101.37px;transform-origin:left top;transform:scaleX(0.9800);">2.80</span>
<span class="t " style="top:125px;font-size:10.4px;line-height:13px;color:#000;left:101.37px;transform-origin:left top;transform:scaleX(0.9800);">2.60</span>
<span class="t " style="top:163px;font-size:10.4px;line-height:13px;color:#000;left:101.37px;transform-origin:left top;transform:scaleX(0.9800);">2.40</span>
<span class="t " style="top:200px;font-size:10.4px;line-height:13px;color:#000;left:101.37px;transform-origin:left top;transform:scaleX(0.9800);">2.20</span>
<span class="t " style="top:238px;font-size:10.4px;line-height:13px;color:#000;left:101.37px;transform-origin:left top;transform:scaleX(0.9800);">2.00</span>
<span class="t " style="top:276px;font-size:10.4px;line-height:13px;color:#000;left:101.37px;transform-origin:left top;transform:scaleX(0.9800);">1.80</span>
<span class="t " style="top:314px;font-size:10.4px;line-height:13px;color:#000;left:101.37px;transform-origin:left top;transform:scaleX(0.9800);">1.60</span>
<span class="t " style="top:352px;font-size:10.4px;line-height:13px;color:#000;left:101.37px;transform-origin:left top;transform:scaleX(0.9800);">1.40</span>
<span class="t " style="top:390px;font-size:10.4px;line-height:13px;color:#000;left:101.37px;transform-origin:left top;transform:scaleX(0.9800);">1.20</span>
<span class="t " style="top:424px;font-size:10.4px;line-height:13px;color:#000;left:101.37px;transform-origin:left top;transform:scaleX(0.9800);">1.00</span>
<span class="t " style="top:439px;font-size:10.4px;line-height:13px;color:#000;left:110.70px;transform-origin:left top;transform:scaleX(0.9654);">Ch1: Start</span>
<span class="t " style="top:439px;font-size:10.4px;line-height:13px;color:#000;left:163.40px;transform-origin:left top;transform:scaleX(0.9855);">10.0000 GHz</span>
<span class="t " style="top:439px;font-size:10.4px;line-height:13px;color:#000;left:539.50px;transform-origin:left top;transform:scaleX(0.9583);">Stop</span>
<span class="t " style="top:439px;font-size:10.4px;line-height:13px;color:#000;left:566.80px;transform-origin:left top;transform:scaleX(0.9953);">40.0000 GHz</span>
<span class="t " style="top:56px;font-size:10.4px;line-height:13px;color:#a46a00;left:466.11px;transform-origin:left top;transform:scaleX(0.9900);">1:</span>
<span class="t " style="top:56px;font-size:10.4px;line-height:13px;color:#a46a00;left:491.90px;transform-origin:left top;transform:scaleX(0.9938);">16.000000 GHz</span>
<span class="t " style="top:56px;font-size:10.4px;line-height:13px;color:#a46a00;left:592.79px;transform-origin:left top;">1.4790</span>
<span class="t " style="top:69px;font-size:10.4px;line-height:13px;color:#a46a00;left:457.24px;transform-origin:left top;transform:scaleX(0.9900);">&gt; 2:</span>
<span class="t " style="top:69px;font-size:10.4px;line-height:13px;color:#a46a00;left:491.90px;transform-origin:left top;transform:scaleX(0.9938);">26.000000 GHz</span>
<span class="t " style="top:69px;font-size:10.4px;line-height:13px;color:#a46a00;left:592.79px;transform-origin:left top;">1.1803</span>
<span class="t " style="top:82px;font-size:10.4px;line-height:13px;color:#00a0a0;left:466.11px;transform-origin:left top;transform:scaleX(0.9900);">1:</span>
<span class="t " style="top:82px;font-size:10.4px;line-height:13px;color:#00a0a0;left:491.90px;transform-origin:left top;transform:scaleX(0.9938);">16.000000 GHz</span>
<span class="t " style="top:82px;font-size:10.4px;line-height:13px;color:#00a0a0;left:571.23px;transform-origin:left top;">-0.78877 dB</span>
<span class="t " style="top:95px;font-size:10.4px;line-height:13px;color:#00a0a0;left:466.11px;transform-origin:left top;transform:scaleX(0.9900);">2:</span>
<span class="t " style="top:95px;font-size:10.4px;line-height:13px;color:#00a0a0;left:491.90px;transform-origin:left top;transform:scaleX(0.9938);">26.000000 GHz</span>
<span class="t " style="top:95px;font-size:10.4px;line-height:13px;color:#00a0a0;left:571.23px;transform-origin:left top;">-0.26741 dB</span>
<span class="t " style="top:108px;font-size:10.4px;line-height:13px;color:#00a0a0;left:466.11px;transform-origin:left top;transform:scaleX(0.9900);">3:</span>
<span class="t " style="top:108px;font-size:10.4px;line-height:13px;color:#00a0a0;left:491.90px;transform-origin:left top;transform:scaleX(0.9938);">12.000000 GHz</span>
<span class="t " style="top:108px;font-size:10.4px;line-height:13px;color:#00a0a0;left:577.01px;transform-origin:left top;">-55.418 dB</span>
<span class="t " style="top:121px;font-size:10.4px;line-height:13px;color:#00a0a0;left:466.11px;transform-origin:left top;transform:scaleX(0.9900);">4:</span>
<span class="t " style="top:121px;font-size:10.4px;line-height:13px;color:#00a0a0;left:491.90px;transform-origin:left top;transform:scaleX(0.9938);">30.000000 GHz</span>
<span class="t " style="top:121px;font-size:10.4px;line-height:13px;color:#00a0a0;left:577.01px;transform-origin:left top;">-40.144 dB</span>
<span class="t " style="top:134px;font-size:10.4px;line-height:13px;color:#00a0a0;left:466.11px;transform-origin:left top;transform:scaleX(0.9900);">5:</span>
<span class="t " style="top:134px;font-size:10.4px;line-height:13px;color:#00a0a0;left:491.90px;transform-origin:left top;transform:scaleX(0.9938);">38.000000 GHz</span>
<span class="t " style="top:134px;font-size:10.4px;line-height:13px;color:#00a0a0;left:577.01px;transform-origin:left top;">-45.937 dB</span>
<span class="t " style="top:147px;font-size:10.4px;line-height:13px;color:#ff00e0;left:466.11px;transform-origin:left top;transform:scaleX(0.9900);">1:</span>
<span class="t " style="top:147px;font-size:10.4px;line-height:13px;color:#ff00e0;left:491.90px;transform-origin:left top;transform:scaleX(0.9938);">16.000000 GHz</span>
<span class="t " style="top:147px;font-size:10.4px;line-height:13px;color:#ff00e0;left:577.01px;transform-origin:left top;">-1.2312 dB</span>
<span class="t " style="top:160px;font-size:10.4px;line-height:13px;color:#ff00e0;left:466.11px;transform-origin:left top;transform:scaleX(0.9900);">2:</span>
<span class="t " style="top:160px;font-size:10.4px;line-height:13px;color:#ff00e0;left:491.90px;transform-origin:left top;transform:scaleX(0.9938);">26.000000 GHz</span>
<span class="t " style="top:160px;font-size:10.4px;line-height:13px;color:#ff00e0;left:571.23px;transform-origin:left top;">-0.18095 dB</span>
<span class="t " style="top:173px;font-size:10.4px;line-height:13px;color:#ff00e0;left:466.11px;transform-origin:left top;transform:scaleX(0.9900);">3:</span>
<span class="t " style="top:173px;font-size:10.4px;line-height:13px;color:#ff00e0;left:491.90px;transform-origin:left top;transform:scaleX(0.9938);">12.000000 GHz</span>
<span class="t " style="top:173px;font-size:10.4px;line-height:13px;color:#ff00e0;left:577.01px;transform-origin:left top;">-53.430 dB</span>
<span class="t " style="top:186px;font-size:10.4px;line-height:13px;color:#ff00e0;left:466.11px;transform-origin:left top;transform:scaleX(0.9900);">4:</span>
<span class="t " style="top:186px;font-size:10.4px;line-height:13px;color:#ff00e0;left:491.90px;transform-origin:left top;transform:scaleX(0.9938);">30.000000 GHz</span>
<span class="t " style="top:186px;font-size:10.4px;line-height:13px;color:#ff00e0;left:577.01px;transform-origin:left top;">-40.502 dB</span>
<span class="t " style="top:199px;font-size:10.4px;line-height:13px;color:#ff00e0;left:466.11px;transform-origin:left top;transform:scaleX(0.9900);">5:</span>
<span class="t " style="top:199px;font-size:10.4px;line-height:13px;color:#ff00e0;left:491.90px;transform-origin:left top;transform:scaleX(0.9938);">38.000000 GHz</span>
<span class="t " style="top:199px;font-size:10.4px;line-height:13px;color:#ff00e0;left:577.01px;transform-origin:left top;">-44.639 dB</span>
<span class="t " style="top:212px;font-size:10.4px;line-height:13px;color:#00d000;left:466.11px;transform-origin:left top;transform:scaleX(0.9900);">1:</span>
<span class="t " style="top:212px;font-size:10.4px;line-height:13px;color:#00d000;left:491.90px;transform-origin:left top;transform:scaleX(0.9938);">16.000000 GHz</span>
<span class="t " style="top:212px;font-size:10.4px;line-height:13px;color:#00d000;left:592.79px;transform-origin:left top;">1.4705</span>
<span class="t " style="top:225px;font-size:10.4px;line-height:13px;color:#00d000;left:466.11px;transform-origin:left top;transform:scaleX(0.9900);">2:</span>
<span class="t " style="top:225px;font-size:10.4px;line-height:13px;color:#00d000;left:491.90px;transform-origin:left top;transform:scaleX(0.9938);">26.000000 GHz</span>
<span class="t " style="top:225px;font-size:10.4px;line-height:13px;color:#00d000;left:592.79px;transform-origin:left top;">1.2963</span>
</body></html>
